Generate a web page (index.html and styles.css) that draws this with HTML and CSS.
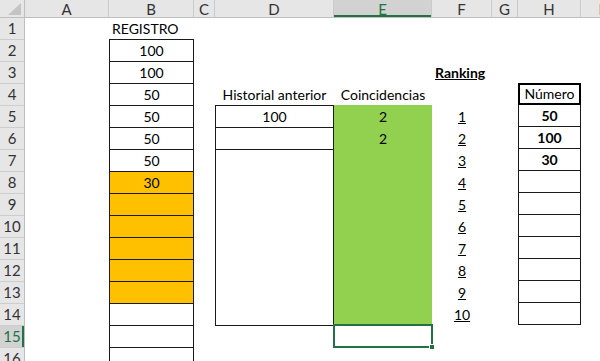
FILE: index.html
```html
<!DOCTYPE html>
<html lang="es">
<head>
<meta charset="utf-8">
<title>Ranking</title>
<link rel="stylesheet" href="styles.css">
</head>
<body>
<div class="app">
  <div class="rowheads">
    <div class="corner"><span class="tri"></span></div>
    <div class="rh">1</div><div class="rh">2</div><div class="rh">3</div><div class="rh">4</div>
    <div class="rh">5</div><div class="rh">6</div><div class="rh">7</div><div class="rh">8</div>
    <div class="rh">9</div><div class="rh">10</div><div class="rh">11</div><div class="rh">12</div>
    <div class="rh">13</div><div class="rh">14</div><div class="rh sel">15</div><div class="rh">16</div>
  </div>
  <div class="main">
    <div class="colheads">
      <div class="ch w-a">A</div>
      <div class="ch w-b">B</div>
      <div class="ch w-c">C</div>
      <div class="ch w-d">D</div>
      <div class="ch w-e sel">E</div>
      <div class="ch w-f">F</div>
      <div class="ch w-g">G</div>
      <div class="ch w-h">H</div>
      <div class="ch w-i">I</div>
    </div>
    <div class="grid">
      <div class="cell b1 left">REGISTRO</div>

      <div class="bcol">
        <div class="bc">100</div>
        <div class="bc">100</div>
        <div class="bc">50</div>
        <div class="bc">50</div>
        <div class="bc">50</div>
        <div class="bc">50</div>
        <div class="bc orange">30</div>
        <div class="bc orange"></div>
        <div class="bc orange"></div>
        <div class="bc orange"></div>
        <div class="bc orange"></div>
        <div class="bc orange"></div>
        <div class="bc"></div>
        <div class="bc"></div>
        <div class="bc"></div>
      </div>

      <div class="cell d4">Historial anterior</div>
      <div class="dbox">
        <div class="dc">100</div>
        <div class="dc"></div>
        <div class="dc merged"></div>
      </div>

      <div class="cell e4">Coincidencias</div>
      <div class="ebox">
        <div class="ec">2</div>
        <div class="ec">2</div>
      </div>
      <div class="e15"><span class="handle"></span></div>

      <div class="cell f3 left"><u>Ranking</u></div>
      <div class="franks">
        <div class="fc"><u>1</u></div>
        <div class="fc"><u>2</u></div>
        <div class="fc"><u>3</u></div>
        <div class="fc"><u>4</u></div>
        <div class="fc"><u>5</u></div>
        <div class="fc"><u>6</u></div>
        <div class="fc"><u>7</u></div>
        <div class="fc"><u>8</u></div>
        <div class="fc"><u>9</u></div>
        <div class="fc"><u>10</u></div>
      </div>

      <div class="hbox">
        <div class="hhead">Número</div>
        <div class="hc">50</div>
        <div class="hc">100</div>
        <div class="hc">30</div>
        <div class="hc"></div>
        <div class="hc"></div>
        <div class="hc"></div>
        <div class="hc"></div>
        <div class="hc"></div>
        <div class="hc"></div>
        <div class="hc"></div>
      </div>
    </div>
  </div>
</div>
</body>
</html>
```

FILE: styles.css
```css
* { box-sizing: border-box; }
html, body {
  margin: 0;
  padding: 0;
  background: #ffffff;
  width: 600px;
  height: 361px;
  overflow: hidden;
}
body {
  font-family: Lato, "Open Sans", "Liberation Sans", sans-serif;
  font-size: 14px;
  color: #000;
}
.app {
  display: flex;
  width: 640px;
}
/* row headers */
.rowheads {
  display: flex;
  flex-direction: column;
  width: 25px;
  flex: none;
  background: #e6e6e6;
  border-right: 1px solid #bfbfbf;
}
.corner {
  height: 18px;
  border-bottom: 1px solid #bfbfbf;
  position: relative;
}
.tri {
  position: absolute;
  right: 3px;
  bottom: 2px;
  width: 13px;
  height: 12px;
  background: #c4c4c4;
  clip-path: polygon(100% 0, 100% 100%, 0 100%);
}
.rh {
  height: 22px;
  border-bottom: 1px solid #cdcdcd;
  display: flex;
  align-items: flex-end;
  justify-content: center;
  padding-bottom: 2px;
  font-size: 15px;
  color: #333;
}
.rh.sel {
  background: #d2d2d2;
  color: #217346;
  box-shadow: inset -2px 0 0 #217346;
}
/* main area */
.main {
  display: flex;
  flex-direction: column;
  flex: none;
}
.colheads {
  display: flex;
  height: 18px;
  background: #e6e6e6;
  border-bottom: 1px solid #bfbfbf;
}
.ch {
  flex: none;
  border-right: 1px solid #cacaca;
  display: flex;
  align-items: center;
  justify-content: center;
  font-size: 15px;
  color: #333;
}
.ch.sel {
  background: #d2d2d2;
  color: #217346;
  box-shadow: inset 0 -2px 0 #217346;
}
.w-a { width: 84px; }
.w-b { width: 85px; }
.w-c { width: 21px; }
.w-d { width: 119px; }
.w-e { width: 98px; }
.w-f { width: 60px; }
.w-g { width: 26px; }
.w-h { width: 63px; }
.w-i { width: 40px; }

.grid {
  display: grid;
  grid-template-columns: 84px 85px 21px 119px 98px 60px 26px 63px 40px;
  grid-template-rows: repeat(16, 22px);
  margin-top: -1px;
}
.cell {
  display: flex;
  align-items: flex-end;
  justify-content: center;
  padding-bottom: 2px;
  white-space: nowrap;
}
.cell.left { justify-content: flex-start; padding-left: 3px; }
.b1 { grid-column: 2; grid-row: 1; }
.d4 { grid-column: 4; grid-row: 4; }
.e4 { grid-column: 5; grid-row: 4; }
.f3 { grid-column: 6; grid-row: 3; font-weight: bold; }

/* B column */
.bcol {
  grid-column: 2;
  grid-row: 2 / span 15;
  display: flex;
  flex-direction: column;
  border-left: 1px solid #1a1a1a;
  border-right: 1px solid #1a1a1a;
}
.bc {
  height: 22px;
  flex: none;
  border-top: 1px solid #1a1a1a;
  display: flex;
  align-items: flex-end;
  justify-content: center;
  padding-bottom: 2px;
}
.bc.orange { background: #ffc000; }

/* D box */
.dbox {
  grid-column: 4;
  grid-row: 5 / span 10;
  display: flex;
  flex-direction: column;
  border: 1px solid #1a1a1a;
  border-top: none;
  height: 221px;
}
.dc {
  height: 22px;
  flex: none;
  border-top: 1px solid #1a1a1a;
  display: flex;
  align-items: flex-end;
  justify-content: center;
  padding-bottom: 2px;
}
.dc.merged { flex: 1; }

/* E column */
.ebox {
  grid-column: 5;
  grid-row: 5 / span 10;
  background: #92d050;
  display: flex;
  flex-direction: column;
}
.ec {
  height: 22px;
  display: flex;
  align-items: flex-end;
  justify-content: center;
  padding-bottom: 2px;
}
.e15 {
  grid-column: 5;
  grid-row: 15;
  margin: -1px -1px -1px -1px;
  border: 2px solid #217346;
  position: relative;
}
.handle {
  position: absolute;
  right: -4px;
  bottom: -4px;
  width: 6px;
  height: 6px;
  background: #217346;
  border: 1px solid #fff;
}

/* F ranks */
.franks {
  grid-column: 6;
  grid-row: 5 / span 10;
  display: flex;
  flex-direction: column;
}
.fc {
  height: 22px;
  display: flex;
  align-items: flex-end;
  justify-content: center;
  padding-bottom: 2px;
}

/* H box */
.hbox {
  grid-column: 8;
  grid-row: 4 / span 11;
  display: flex;
  flex-direction: column;
  border-left: 1px solid #1a1a1a;
  border-right: 1px solid #1a1a1a;
  border-bottom: 1px solid #1a1a1a;
}
.hhead {
  height: 22px;
  flex: none;
  border: 2px solid #000;
  margin: 0 -1px;
  display: flex;
  align-items: flex-end;
  justify-content: center;
  padding-bottom: 1px;
}
.hc {
  height: 22px;
  flex: none;
  display: flex;
  align-items: flex-end;
  justify-content: center;
  padding-bottom: 2px;
  font-weight: bold;
  border-bottom: 1px solid #1a1a1a;
}
.hc:last-child { border-bottom: none; }
```
